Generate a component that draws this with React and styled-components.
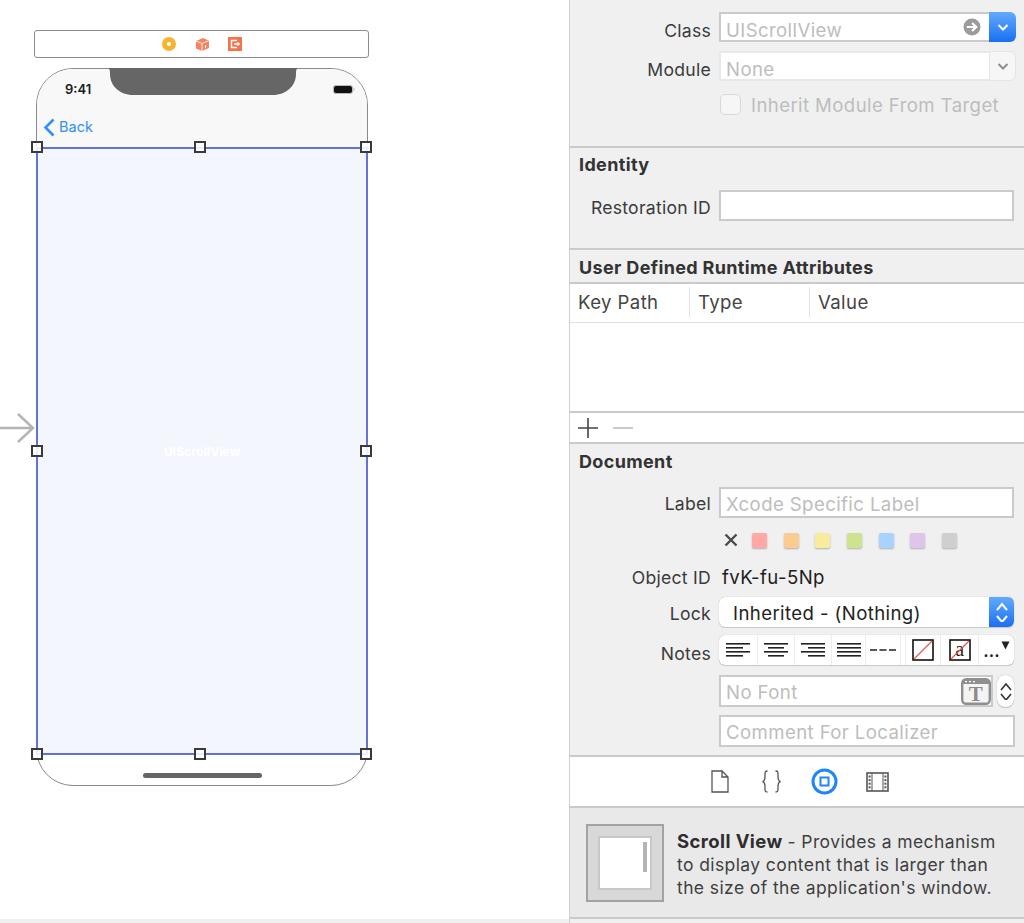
import React from 'react';
import styled, { createGlobalStyle } from 'styled-components';

const GlobalStyle = createGlobalStyle`
  html, body {
    margin: 0;
    padding: 0;
    background: #fff;
  }
  body {
    font-family: Inter, "Noto Sans", sans-serif;
    overflow: hidden;
  }
`;

const Page = styled.div`
  width: 1024px;
  height: 923px;
  display: flex;
  overflow: hidden;
`;

const Canvas = styled.div`
  width: 569px;
  flex-shrink: 0;
  display: flex;
  flex-direction: column;
  background: #fff;
`;

const CanvasArea = styled.div`
  flex: 1;
  padding: 30px 0 0 34px;
`;

const CanvasEdge = styled.div`
  height: 4px;
  background: #f0f0f0;
`;

const SceneDock = styled.div`
  width: 335px;
  height: 28px;
  box-sizing: border-box;
  border: 1px solid #8c8c8c;
  border-radius: 3px;
  display: flex;
  align-items: center;
  justify-content: center;
  gap: 18px;
  margin-bottom: 10px;
`;

const Phone = styled.div`
  position: relative;
  width: 332px;
  height: 718px;
  margin-left: 2px;
  box-sizing: border-box;
  border: 1px solid #8a8a8a;
  border-radius: 37px;
  display: flex;
  flex-direction: column;
`;

const NavArea = styled.div`
  position: relative;
  height: 78px;
  flex-shrink: 0;
  background: #f8f8f8;
  border-radius: 36px 36px 0 0;
`;

const Notch = styled.svg`
  position: absolute;
  left: 71px;
  top: -1px;
`;

const Clock = styled.span`
  position: absolute;
  left: 28px;
  top: 12px;
  font-size: 13px;
  line-height: 16px;
  font-weight: 600;
  color: #1c1c1c;
`;

const Battery = styled.svg`
  position: absolute;
  left: 296px;
  top: 16px;
`;

const BackLink = styled.div`
  position: absolute;
  left: 6px;
  top: 48px;
  display: flex;
  align-items: center;
  gap: 4px;
  font-size: 14.5px;
  line-height: 20px;
  color: #2f8ffb;
`;

const SelectedView = styled.div`
  position: relative;
  height: 608px;
  flex-shrink: 0;
  margin: 0 -1px;
  box-sizing: border-box;
  border: 2px solid #6472d8;
  background: #f3f6fd;
  display: flex;
  align-items: center;
  justify-content: center;
  font-size: 12.2px;
  font-weight: 700;
  color: #fff;
`;

const Handle = styled.span`
  position: absolute;
  left: ${(p) => p.$x}px;
  top: ${(p) => p.$y}px;
  width: 12px;
  height: 12px;
  box-sizing: border-box;
  border: 2px solid #3a3a3a;
  background: rgba(255, 255, 255, 0.88);
`;

const EntryArrow = styled.svg`
  position: absolute;
  left: -37px;
  top: 343px;
`;

const PhoneFooter = styled.div`
  flex: 1;
  display: flex;
  justify-content: center;
  padding-top: 18px;
`;

const HomeBar = styled.div`
  width: 119px;
  height: 5px;
  border-radius: 3px;
  background: #666;
`;

const Inspector = styled.div`
  flex: 1;
  border-left: 1px solid #d0d0d0;
  background: #f0f0f0;
  color: #333;
  font-size: 18.6px;
  letter-spacing: 0.4px;
`;

const Section = styled.section`
  height: ${(p) => p.$height}px;
  box-sizing: border-box;
  padding-top: ${(p) => p.$pad || 0}px;
  background: ${(p) => (p.$white ? '#fff' : 'transparent')};
  border-bottom: ${(p) => (p.$line ? `${p.$lineWidth || 2}px solid ${p.$line}` : 'none')};
`;

const Title = styled.h3`
  margin: 0;
  padding-left: 9px;
  font-size: 18px;
  line-height: 22px;
  letter-spacing: 0.35px;
  font-weight: 700;
  color: #333;
`;

const Row = styled.div`
  display: grid;
  grid-template-columns: 141px 1fr;
  column-gap: 8px;
  align-items: center;
  height: ${(p) => p.$height}px;
  margin-top: ${(p) => p.$top || 0}px;
`;

const Label = styled.label`
  text-align: right;
  font-size: 17.6px;
  letter-spacing: 0.25px;
  padding-top: ${(p) => p.$drop || 0}px;
  color: #3a3a3a;
`;

const Field = styled.div`
  width: ${(p) => p.$width || 295}px;
  height: ${(p) => p.$height || 31}px;
  box-sizing: border-box;
  border: 2px solid #cacaca;
  background: #fff;
  padding: ${(p) => p.$drop || 0}px 0 0 5px;
  display: flex;
  align-items: center;
  justify-content: space-between;
  color: #bdbdbd;
  svg {
    margin-top: ${(p) => -(p.$drop || 0)}px;
  }
`;

const ComboBox = styled.div`
  width: 297px;
  height: 30px;
  display: flex;
`;

const ComboInput = styled.div`
  flex: 1;
  box-sizing: border-box;
  padding: 5px 8px 0 5px;
  display: flex;
  align-items: center;
  justify-content: space-between;
  border: 2px solid ${(p) => (p.$disabled ? '#e8e8e8' : '#cacaca')};
  border-right: none;
  background: #fff;
  color: #bdbdbd;
  svg {
    margin-top: -5px;
  }
`;

const ComboButton = styled.div`
  width: 27px;
  flex-shrink: 0;
  display: flex;
  align-items: center;
  justify-content: center;
  border-radius: 0 6px 6px 0;
  background: ${(p) => (p.$active ? 'linear-gradient(#62aafc, #1a6ff2)' : '#f6f6f6')};
  border: ${(p) => (p.$active ? 'none' : '1px solid #e4e4e4')};
  box-sizing: border-box;
`;

const CheckRow = styled.div`
  display: flex;
  align-items: center;
  gap: 10px;
  margin: 13px 0 0 150px;
  height: 21px;
  color: #bdbdbd;
`;

const CheckBox = styled.span`
  width: 21px;
  height: 21px;
  box-sizing: border-box;
  border: 1px solid #d8d8d8;
  border-radius: 5px;
  background: #f6f6f6;
`;

const TableHead = styled.div`
  height: 100%;
  display: flex;
  align-items: center;
  padding-bottom: 2px;
  box-sizing: border-box;
  color: #444;
`;

const HeadCell = styled.div`
  width: ${(p) => p.$width}px;
  height: 30px;
  box-sizing: border-box;
  padding-left: ${(p) => p.$pad}px;
  display: flex;
  align-items: center;
  border-right: ${(p) => (p.$last ? 'none' : '1px solid #e2e2e2')};
`;

const AddBar = styled.div`
  height: 100%;
  display: flex;
  align-items: center;
  gap: 15px;
  padding-left: 8px;
`;

const Swatches = styled.div`
  display: flex;
  align-items: center;
  margin: 14px 0 0 154px;
  height: 16px;
`;

const Clear = styled.svg`
  margin-right: 14px;
`;

const Swatch = styled.span`
  width: 15px;
  height: 15px;
  margin-right: 16.7px;
  border-radius: 2px;
  background: ${(p) => p.$color};
  box-shadow: 0 1px 2px rgba(0, 0, 0, 0.28);
`;

const ObjectId = styled.div`
  padding-left: 3px;
  color: #1d1d1d;
`;

const Popup = styled.div`
  width: 295px;
  height: 30px;
  display: flex;
  border-radius: 6px;
  background: #fff;
  box-shadow: 0 0 1px rgba(0, 0, 0, 0.3), 0 1px 1px rgba(0, 0, 0, 0.15);
  color: #222;
  overflow: hidden;
`;

const PopupText = styled.div`
  flex: 1;
  padding: 2px 0 0 14px;
  display: flex;
  align-items: center;
`;

const PopupArrows = styled.div`
  width: 25px;
  display: flex;
  align-items: center;
  justify-content: center;
  background: linear-gradient(#62aafc, #1a6ff2);
`;

const Segments = styled.div`
  width: 295px;
  height: 30px;
  display: flex;
  border-radius: 6px;
  background: #fff;
  box-shadow: 0 0 1px rgba(0, 0, 0, 0.3), 0 1px 1px rgba(0, 0, 0, 0.15);
`;

const Segment = styled.div`
  width: ${(p) => p.$width}px;
  flex-shrink: 0;
  box-sizing: border-box;
  display: flex;
  align-items: center;
  justify-content: center;
  border-right: ${(p) => (p.$last ? 'none' : '1px solid #ececec')};
`;

const MoreDots = styled.span`
  font-size: 17px;
  letter-spacing: 0;
  font-weight: 600;
  color: #222;
  margin-top: 2px;
`;

const MoreArrow = styled.svg`
  align-self: flex-start;
  margin: 6px 0 0 1px;
`;

const FontRow = styled.div`
  display: flex;
  gap: 4px;
  margin: 10px 0 0 149px;
`;

const Stepper = styled.div`
  width: 17px;
  height: 32px;
  border-radius: 8px;
  background: #fff;
  box-shadow: 0 0 1px rgba(0, 0, 0, 0.35), 0 1px 1px rgba(0, 0, 0, 0.15);
  display: flex;
  align-items: center;
  justify-content: center;
`;

const CommentField = styled(Field)`
  margin: 8px 0 0 149px;
`;

const Tabs = styled.div`
  height: 100%;
  display: flex;
  align-items: center;
  padding-left: 125px;
`;

const Tab = styled.div`
  width: ${(p) => p.$width}px;
  display: flex;
  justify-content: center;
`;

const Description = styled.div`
  height: 100%;
  display: flex;
  align-items: flex-start;
  padding: 16px 0 0 16px;
  box-sizing: border-box;
  background: #e9e9e9;
`;

const Thumb = styled.div`
  width: 78px;
  height: 78px;
  box-sizing: border-box;
  flex-shrink: 0;
  border: 2px solid #a2a2a2;
  background: #d8d8d8;
  padding: 10px;
`;

const ThumbPage = styled.div`
  height: 100%;
  box-sizing: border-box;
  border: 2px solid #c8c8c8;
  background: #fff;
  display: flex;
  justify-content: flex-end;
  padding: 4px 3px 0 0;
`;

const ThumbBar = styled.div`
  width: 4px;
  height: 30px;
  background: #b4b4b4;
`;

const DescText = styled.div`
  margin: 6px 0 0 13px;
  font-size: 17.5px;
  letter-spacing: 0.4px;
  color: #3f3f3f;
`;

const DescLine = styled.div`
  height: 23px;
  line-height: 23px;
  white-space: pre;
  display: flex;
`;

const DescName = styled.span`
  font-size: 18.5px;
  font-weight: 700;
  color: #2d2d2d;
  margin-right: 5px;
`;

function BookIcon() {
  return (
    <svg width="16" height="16" viewBox="0 0 16 16">
      <circle cx="8" cy="8" r="7" fill="#f2b632" />
      <rect x="6.2" y="6.2" width="3.6" height="3.6" rx="1" fill="#fff" />
    </svg>
  );
}

function CubeIcon() {
  return (
    <svg width="15" height="15" viewBox="0 0 15 15">
      <path d="M1 4 L8 1 L14 3.5 V11 L7 14 L1 11.5 Z" fill="#f58462" />
      <path d="M1 4 L7 6.5 V14 M7 6.5 L14 3.5" stroke="#fff" strokeWidth="0.8" fill="none" />
      <path d="M10.5 8 V11" stroke="#fff" strokeWidth="0.9" />
    </svg>
  );
}

function ExitIcon() {
  return (
    <svg width="14" height="14" viewBox="0 0 14 14">
      <rect width="14" height="14" fill="#f5734a" />
      <path d="M9 3.5 H3.5 V10.5 H9" fill="none" stroke="#fff" strokeWidth="1.4" />
      <path d="M6 7 H11 M9.5 5.4 L11.4 7 L9.5 8.6" fill="none" stroke="#fff" strokeWidth="1.3" />
    </svg>
  );
}

function Chevron({ color = '#fff' }) {
  return (
    <svg width="12" height="7" viewBox="0 0 12 7">
      <path d="M1.5 1 L6 5.5 L10.5 1" fill="none" stroke={color} strokeWidth="2" />
    </svg>
  );
}

function UpDown({ color, gap = 4, strokeWidth }) {
  return (
    <svg width="14" height={14 + gap + 2} viewBox={`0 0 14 ${14 + gap + 2}`}>
      <path d="M2 8 L7 2 L12 8" fill="none" stroke={color} strokeWidth={strokeWidth} />
      <path d={`M2 ${gap + 10} L7 ${gap + 16} L12 ${gap + 10}`} fill="none" stroke={color} strokeWidth={strokeWidth} />
    </svg>
  );
}

function GoArrow() {
  return (
    <svg width="18" height="18" viewBox="0 0 18 18">
      <circle cx="9" cy="9" r="8.5" fill="#9b9b9b" />
      <path d="M3.8 9 H12 M9 5 L13.2 9 L9 13" fill="none" stroke="#fff" strokeWidth="2.2" />
    </svg>
  );
}

function AlignIcon({ lines }) {
  return (
    <svg width="26" height="14" viewBox="0 0 26 14">
      {lines.map(([x, w], i) => (
        <rect key={i} x={x} y={i * 4} width={w} height="1.6" fill="#222" />
      ))}
    </svg>
  );
}

function NoColorIcon({ letter }) {
  return (
    <svg width="22" height="22" viewBox="0 0 22 22">
      <rect x="1" y="1" width="20" height="20" fill="#fff" stroke="#111" strokeWidth="1.6" />
      {letter && <text x="11" y="17" textAnchor="middle" fontFamily="Liberation Serif" fontSize="20" fill="#222">a</text>}
      <path d="M2 20 L20 2" stroke="#ea4f4a" strokeWidth="1.1" />
    </svg>
  );
}

function FontIcon() {
  return (
    <svg width="30" height="27" viewBox="0 0 30 27">
      <rect x="1.2" y="1.2" width="27.6" height="24.6" rx="4" fill="#f4f4f4" stroke="#8f8f8f" strokeWidth="2.4" />
      <rect x="2" y="2" width="26" height="4" fill="#8f8f8f" />
      <path d="M4 3.6 H6 M8 3.6 H10 M12 3.6 H14" stroke="#fff" strokeWidth="1.2" />
      <text x="15" y="22.5" textAnchor="middle" fontFamily="Liberation Serif" fontWeight="700" fontSize="21" fill="#8a8a8a">T</text>
    </svg>
  );
}

function FileTab() {
  return (
    <svg width="18" height="23" viewBox="0 0 18 23">
      <path d="M1 1 H11 L17 7 V22 H1 Z M11 1 V7 H17" fill="#fff" stroke="#555" strokeWidth="1.3" />
    </svg>
  );
}

function BracesTab() {
  return (
    <svg width="21" height="23" viewBox="0 0 21 23">
      <path d="M6.5 1 C3.5 1 4 3 4 6.5 C4 9.5 3.5 11 1.5 11.5 C3.5 12 4 13.5 4 16.5 C4 20 3.5 22 6.5 22" fill="none" stroke="#555" strokeWidth="1.3" />
      <path d="M14.5 1 C17.5 1 17 3 17 6.5 C17 9.5 17.5 11 19.5 11.5 C17.5 12 17 13.5 17 16.5 C17 20 17.5 22 14.5 22" fill="none" stroke="#555" strokeWidth="1.3" />
    </svg>
  );
}

function IdentityTab() {
  return (
    <svg width="27" height="27" viewBox="0 0 27 27">
      <circle cx="13.5" cy="13.5" r="11.5" fill="#fff" stroke="#1f86f5" strokeWidth="3" />
      <rect x="9.5" y="9.5" width="8" height="8" fill="#fff" stroke="#1f86f5" strokeWidth="2" />
    </svg>
  );
}

function FilmTab() {
  const holes = [0, 1, 2, 3];
  return (
    <svg width="23" height="20" viewBox="0 0 23 20">
      <rect x="1" y="1" width="21" height="18" fill="#fff" stroke="#555" strokeWidth="1.6" />
      <path d="M6 1 V19 M17 1 V19" stroke="#555" strokeWidth="1" />
      {holes.map((i) => (
        <g key={i}>
          <rect x="2.6" y={3.5 + i * 3.6} width="2" height="2" fill="#555" />
          <rect x="18.4" y={3.5 + i * 3.6} width="2" height="2" fill="#555" />
        </g>
      ))}
    </svg>
  );
}

const HANDLES = [
  [-7, -8], [156, -8], [322, -8],
  [-7, 296], [322, 296],
  [-7, 599], [156, 599], [322, 599],
];

const COLORS = ['#ffa8a6', '#fccb92', '#f8ec9c', '#cee38e', '#a8d2ff', '#dfc4ec', '#cfcfcf'];

const ALIGN = {
  left: [[1, 24], [1, 17], [1, 24], [1, 17]],
  center: [[1, 24], [5, 16], [1, 24], [5, 16]],
  right: [[1, 24], [8, 17], [1, 24], [8, 17]],
  justify: [[1, 24], [1, 24], [1, 24], [1, 24]],
};

function App() {
  return (
    <Page>
      <GlobalStyle />
      <Canvas>
        <CanvasArea>
          <SceneDock>
            <BookIcon />
            <CubeIcon />
            <ExitIcon />
          </SceneDock>
          <Phone>
            <NavArea>
              <Notch width="190" height="28" viewBox="0 0 190 28">
                <path d="M0 0 H190 C188 1 188 3 188 6 C188 18 178 27 165 27 H25 C12 27 2 18 2 6 C2 3 2 1 0 0 Z" fill="#666" />
              </Notch>
              <Clock>9:41</Clock>
              <Battery width="22" height="9" viewBox="0 0 22 9">
                <rect x="0.5" y="0.5" width="19" height="8" rx="2.5" fill="#111" stroke="#bbb" />
                <rect x="20.5" y="3" width="1" height="3" fill="#bbb" />
              </Battery>
              <BackLink>
                <svg width="12" height="19" viewBox="0 0 12 19">
                  <path d="M10.5 1.5 L2.5 9.5 L10.5 17.5" fill="none" stroke="#2f8ffb" strokeWidth="2.6" />
                </svg>
                Back
              </BackLink>
            </NavArea>
            <SelectedView>
              UIScrollView
              {HANDLES.map(([x, y]) => (
                <Handle key={`${x}-${y}`} $x={x} $y={y} />
              ))}
            </SelectedView>
            <PhoneFooter>
              <HomeBar />
            </PhoneFooter>
            <EntryArrow width="35" height="32" viewBox="0 0 35 32">
              <path d="M0 16 H33 M18 2 L33 16 L18 30" fill="none" stroke="#b4b4b4" strokeWidth="2.4" />
            </EntryArrow>
          </Phone>
        </CanvasArea>
        <CanvasEdge />
      </Canvas>

      <Inspector>
        <Section $height={148} $pad={12} $line="#cacaca">
          <Row $height={30}>
            <Label $drop={6}>Class</Label>
            <ComboBox>
              <ComboInput>
                UIScrollView
                <GoArrow />
              </ComboInput>
              <ComboButton $active>
                <Chevron />
              </ComboButton>
            </ComboBox>
          </Row>
          <Row $height={30} $top={9}>
            <Label $drop={6}>Module</Label>
            <ComboBox>
              <ComboInput $disabled>None</ComboInput>
              <ComboButton>
                <Chevron color="#8e8e8e" />
              </ComboButton>
            </ComboBox>
          </Row>
          <CheckRow>
            <CheckBox />
            Inherit Module From Target
          </CheckRow>
        </Section>

        <Section $height={102} $pad={6} $line="#cacaca">
          <Title>Identity</Title>
          <Row $height={31} $top={14}>
            <Label $drop={4}>Restoration ID</Label>
            <Field />
          </Row>
        </Section>

        <Section $height={34} $pad={7} $line="#cacaca">
          <Title>User Defined Runtime Attributes</Title>
        </Section>

        <Section $height={39} $white $line="#e2e2e2" $lineWidth={1}>
          <TableHead>
            <HeadCell $width={120} $pad={8}>Key Path</HeadCell>
            <HeadCell $width={120} $pad={8}>Type</HeadCell>
            <HeadCell $width={200} $pad={8} $last>Value</HeadCell>
          </TableHead>
        </Section>

        <Section $height={90} $white $line="#cacaca" />

        <Section $height={31} $white $line="#cacaca">
          <AddBar>
            <svg width="20" height="20" viewBox="0 0 20 20">
              <path d="M0 10 H20 M10 0 V20" stroke="#444" strokeWidth="1.6" />
            </svg>
            <svg width="20" height="20" viewBox="0 0 20 20">
              <path d="M0 10 H20" stroke="#bdbdbd" strokeWidth="1.6" />
            </svg>
          </AddBar>
        </Section>

        <Section $height={313} $pad={7} $line="#cacaca">
          <Title>Document</Title>
          <Row $height={31} $top={14}>
            <Label $drop={2}>Label</Label>
            <Field $drop={2}>Xcode Specific Label</Field>
          </Row>
          <Swatches>
            <Clear width="14" height="14" viewBox="0 0 14 14">
              <path d="M1.5 1.5 L12.5 12.5 M12.5 1.5 L1.5 12.5" stroke="#4a4a4a" strokeWidth="2.4" />
            </Clear>
            {COLORS.map((c) => (
              <Swatch key={c} $color={c} />
            ))}
          </Swatches>
          <Row $height={24} $top={17}>
            <Label>Object ID</Label>
            <ObjectId>fvK-fu-5Np</ObjectId>
          </Row>
          <Row $height={30} $top={8}>
            <Label $drop={2}>Lock</Label>
            <Popup>
              <PopupText>Inherited - (Nothing)</PopupText>
              <PopupArrows>
                <UpDown color="#fff" strokeWidth={2} />
              </PopupArrows>
            </Popup>
          </Row>
          <Row $height={30} $top={8}>
            <Label $drop={6}>Notes</Label>
            <Segments>
              <Segment $width={39}><AlignIcon lines={ALIGN.left} /></Segment>
              <Segment $width={37}><AlignIcon lines={ALIGN.center} /></Segment>
              <Segment $width={37}><AlignIcon lines={ALIGN.right} /></Segment>
              <Segment $width={34}><AlignIcon lines={ALIGN.justify} /></Segment>
              <Segment $width={35}>
                <svg width="26" height="4" viewBox="0 0 26 4">
                  <path d="M0 2 H7 M9.5 2 H16.5 M19 2 H26" stroke="#222" strokeWidth="1.6" />
                </svg>
              </Segment>
              <Segment $width={5} />
              <Segment $width={35}><NoColorIcon /></Segment>
              <Segment $width={38}><NoColorIcon letter /></Segment>
              <Segment $width={35} $last>
                <MoreDots>...</MoreDots>
                <MoreArrow width="9" height="9" viewBox="0 0 9 9">
                  <path d="M0.5 0.5 H8.5 L4.5 8.5 Z" fill="#222" />
                </MoreArrow>
              </Segment>
            </Segments>
          </Row>
          <FontRow>
            <Field $width={274} $height={32} $drop={2}>
              No Font
              <FontIcon />
            </Field>
            <Stepper>
              <UpDown color="#333" gap={2} strokeWidth={1.6} />
            </Stepper>
          </FontRow>
          <CommentField $width={296} $height={32} $drop={2}>Comment For Localizer</CommentField>
        </Section>

        <Section $height={51} $white $line="#cacaca">
          <Tabs>
            <Tab $width={50}><FileTab /></Tab>
            <Tab $width={53}><BracesTab /></Tab>
            <Tab $width={53}><IdentityTab /></Tab>
            <Tab $width={53}><FilmTab /></Tab>
          </Tabs>
        </Section>

        <Section $height={111} $line="#cacaca">
          <Description>
            <Thumb>
              <ThumbPage>
                <ThumbBar />
              </ThumbPage>
            </Thumb>
            <DescText>
              <DescLine>
                <DescName>Scroll View</DescName>
                <span>- Provides a mechanism</span>
              </DescLine>
              <DescLine>to display content that is larger than</DescLine>
              <DescLine>the size of the application's window.</DescLine>
            </DescText>
          </Description>
        </Section>
      </Inspector>
    </Page>
  );
}

export default App;
